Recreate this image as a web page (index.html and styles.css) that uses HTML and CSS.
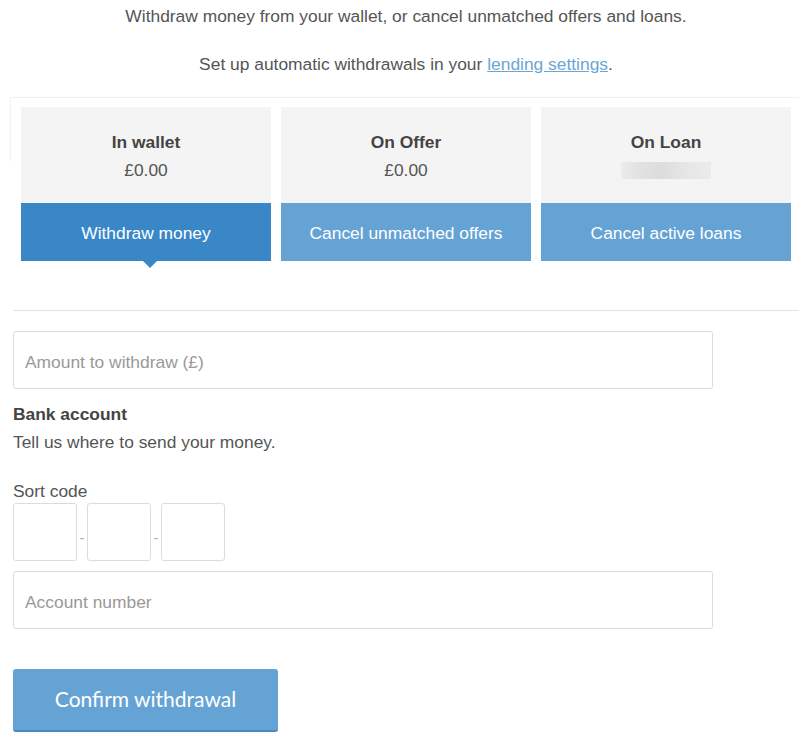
FILE: index.html
```html
<!DOCTYPE html>
<html lang="en">
<head>
    <meta charset="UTF-8">
    <meta name="viewport" content="width=device-width, initial-scale=1.0">
    <title>Withdraw</title>
    <link rel="stylesheet" href="styles.css">
</head>
<body>
    <div id="page">
        <p class="intro">Withdraw money from your wallet, or cancel unmatched offers and loans.</p>
        <p class="intro intro-second">Set up automatic withdrawals in your <a href="#">lending settings</a>.</p>

        <div class="tabs">
            <div class="tab active">
                <div class="tab-info">
                    <div class="tab-title">In wallet</div>
                    <div class="tab-amount">£0.00</div>
                </div>
                <div class="tab-action">Withdraw money</div>
            </div>
            <div class="tab">
                <div class="tab-info">
                    <div class="tab-title">On Offer</div>
                    <div class="tab-amount">£0.00</div>
                </div>
                <div class="tab-action">Cancel unmatched offers</div>
            </div>
            <div class="tab">
                <div class="tab-info">
                    <div class="tab-title">On Loan</div>
                    <div class="tab-amount"><span class="blurred"></span></div>
                </div>
                <div class="tab-action">Cancel active loans</div>
            </div>
        </div>

        <hr class="divider">

        <form class="withdraw-form">
            <input class="field" type="text" placeholder="Amount to withdraw (£)">

            <h3 class="form-heading">Bank account</h3>
            <p class="form-note">Tell us where to send your money.</p>

            <label class="form-label">Sort code</label>
            <div class="sort-code">
                <input class="sort-box" type="text">
                <span class="sort-dash">-</span>
                <input class="sort-box" type="text">
                <span class="sort-dash">-</span>
                <input class="sort-box" type="text">
            </div>

            <input class="field" type="text" placeholder="Account number">

            <button type="button" class="confirm-button">Confirm withdrawal</button>
        </form>
    </div>
</body>
</html>
```

FILE: styles.css
```css
body {
    margin: 0;
    padding: 0;
    background-color: white;
    color: #555;
    font-family: "Liberation Sans", Arial, sans-serif;
    font-size: 17.4px;
}
#page {
    padding: 0 0 0 13px;
}
.intro {
    margin: 5px 0 0 0;
    text-align: center;
    line-height: 22px;
}
.intro-second {
    margin-top: 26px;
}
.intro a {
    color: #6aa6d6;
    text-decoration: underline;
}

/* the three balance tabs */
.tabs {
    position: relative;
    display: flex;
    gap: 10px;
    margin: 22px 0 0 -3px;
    padding: 10px 0 0 11px;
}
.tabs::before {
    content: "";
    position: absolute;
    top: 0;
    left: 0;
    right: 0;
    height: 63px;
    border-top: 1px solid #f1f1f1;
    border-left: 1px solid #f1f1f1;
}
.tab {
    position: relative;
    width: 250px;
    text-align: center;
}
.tab-info {
    background-color: #f4f4f4;
    height: 96px;
    box-sizing: border-box;
    padding-top: 24px;
}
.tab-title {
    font-weight: bold;
    color: #444;
    line-height: 22px;
}
.tab-amount {
    margin-top: 6px;
    line-height: 22px;
    height: 22px;
}
.blurred {
    display: inline-block;
    width: 90px;
    height: 17px;
    margin-top: 3px;
    background: linear-gradient(90deg, #ececec 0, #e2e2e2 20%, #dcdcdc 45%, #e4e4e4 65%, #ebebeb 100%);
}
.tab-action {
    background-color: #66a3d5;
    color: white;
    height: 58px;
    line-height: 60px;
}
.tab.active .tab-action {
    background-color: #3a87c8;
}
.tab.active::after {
    content: "";
    position: absolute;
    left: 122px;
    bottom: -7px;
    border-left: 7px solid transparent;
    border-right: 7px solid transparent;
    border-top: 7px solid #3a87c8;
}

.divider {
    border: none;
    border-top: 1px solid #e3e3e3;
    margin: 49px 0 20px 0;
}

/* form */
.withdraw-form {
    width: 700px;
}
.field {
    display: block;
    width: 700px;
    height: 58px;
    box-sizing: border-box;
    border: 1px solid #dcdcdc;
    border-radius: 3px;
    padding: 4px 11px 0 11px;
    font-family: "Liberation Sans", Arial, sans-serif;
    font-size: 17.4px;
    color: #555;
}
.field::placeholder {
    color: #999;
}
.form-heading {
    margin: 14px 0 0 0;
    font-size: 17.4px;
    line-height: 22px;
    color: #444;
}
.form-note {
    margin: 6px 0 0 0;
    line-height: 22px;
}
.form-label {
    display: block;
    margin-top: 27px;
    line-height: 22px;
}
.sort-code {
    display: flex;
    align-items: center;
    margin: 1px 0 10px 0;
}
.sort-box {
    width: 64px;
    height: 58px;
    box-sizing: border-box;
    border: 1px solid #dcdcdc;
    border-radius: 3px;
}
.sort-dash {
    width: 10px;
    text-align: center;
    color: #aaa;
    font-size: 14px;
    padding-top: 12px;
}
.confirm-button {
    display: block;
    margin-top: 40px;
    width: 265px;
    height: 63px;
    padding-bottom: 4px;
    background-color: #66a3d5;
    color: white;
    border: none;
    border-bottom: 2px solid #4a8ac2;
    border-radius: 3px;
    font-family: Lato, sans-serif;
    font-size: 21px;
    cursor: pointer;
}
```
